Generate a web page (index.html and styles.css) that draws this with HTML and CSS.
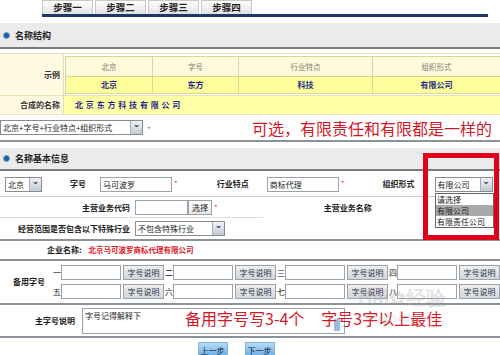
FILE: index.html
```html
<html>
<head>
	<meta charset="utf-8">
	<link rel="stylesheet" href="styles.css">
</head>
<body>
<div class="tabs">
	<div class="tab">步骤一</div>
	<div class="tab">步骤二</div>
	<div class="tab">步骤三</div>
	<div class="tab">步骤四</div>
</div>

<div class="section-head"><span class="dot"></span>名称结构</div>

<div class="sample">
	<div class="sample-row">
		<div class="sample-label">示例</div>
		<div class="sample-table">
			<div class="st-head">
				<div class="c1">北京</div><div class="c2">字号</div><div class="c3">行业特点</div><div class="c4">组织形式</div>
			</div>
			<div class="st-data">
				<div class="c1">北京</div><div class="c2">东方</div><div class="c3">科技</div><div class="c4">有限公司</div>
			</div>
		</div>
	</div>
	<div class="sample-row composed">
		<div class="sample-label">合成的名称</div>
		<div class="composed-value">北 京 东 方 科 技 有 限 公 司</div>
	</div>
</div>

<div class="pick-row">
	<div class="select wide">北京+字号+行业特点+组织形式<span class="arrow">&#8964;</span></div>
	<span class="star">·</span>
	<div class="note">可选，有限责任和有限都是一样的</div>
</div>

<div class="section-head second"><span class="dot"></span>名称基本信息</div>

<div class="form-row first">
	<div class="select city">北京<span class="arrow">&#8964;</span></div>
	<span class="lbl l-zihao">字号</span>
	<div class="input w72">马可波罗</div><span class="star">*</span>
	<span class="lbl l-hangye">行业特点</span>
	<div class="input w72">商标代理</div><span class="star">*</span>
	<span class="lbl l-zuzhi">组织形式</span>
	<div class="select org">有限公司<span class="arrow">&#8964;</span></div>
</div>

<div class="form-block">
	<div class="form-row code">
		<span class="lbl right">主营业务代码</span>
		<div class="input w53"></div><div class="btn">选择</div><span class="star">*</span>
		<span class="lbl l-mingcheng">主营业务名称</span>
	</div>
	<div class="form-row scope-row">
		<span class="lbl right">经营范围是否包含以下特殊行业</span>
		<div class="select scope">不包含特殊行业<span class="arrow">&#8964;</span></div>
	</div>
</div>

<div class="company-row">
	<span class="lbl">企业名称:</span>
	<span class="company">北京马可波罗商标代理有限公司</span>
</div>

<div class="backup">
	<span class="lbl backup-label">备用字号</span>
	<div class="backup-grid">
		<div class="backup-line">
			<span class="num">一</span><div class="input w60"></div><div class="btn gray">字号说明</div>
			<span class="num">二</span><div class="input w60"></div><div class="btn gray">字号说明</div>
			<span class="num">三</span><div class="input w60"></div><div class="btn gray">字号说明</div>
			<span class="num">四</span><div class="input w60"></div><div class="btn gray">字号说明</div>
		</div>
		<div class="backup-line">
			<span class="num">五</span><div class="input w60"></div><div class="btn gray">字号说明</div>
			<span class="num">六</span><div class="input w60"></div><div class="btn gray">字号说明</div>
			<span class="num">七</span><div class="input w60"></div><div class="btn gray">字号说明</div>
			<span class="num">八</span><div class="input w60"></div><div class="btn gray">字号说明</div>
		</div>
	</div>
</div>

<div class="desc-row">
	<span class="lbl">主字号说明</span>
	<div class="textarea">字号记得解释下<span class="grip"></span></div>
	<div class="overlay-note">备用字号写3-4个<span class="gap"></span>字号3字以上最佳</div>
</div>

<div class="nav">
	<div class="nav-btn">上一步</div>
	<div class="nav-btn">下一步</div>
</div>

<div class="watermark">Bai<span>&#10047;</span>经验<br><small>jingyan.baidu.com</small></div>

<div class="highlight"></div>
<div class="dropdown">
	<div>请选择</div>
	<div class="on">有限公司</div>
	<div>有限责任公司</div>
</div>
</body>
</html>
```

FILE: styles.css
```css
body {
	margin: 0;
	width: 500px;
	height: 355px;
	overflow: hidden;
	background: #fff;
	font-family: "Noto Sans CJK SC", "DejaVu Sans", sans-serif;
	font-size: 8px;
	line-height: 1;
	color: #222;
	position: relative;
}

.tabs {
	display: flex;
	gap: 2px;
	margin-left: 42px;
	margin-right: 12px;
	height: 14px;
	border-bottom: 3px solid #1f3769;
}
.tab {
	width: 51px;
	height: 14px;
	box-sizing: border-box;
	border: 1px solid #c8c8c8;
	border-bottom: none;
	background: linear-gradient(#ffffff, #e2e2e2);
	font-weight: bold;
	text-align: center;
	line-height: 13px;
	font-size: 9.5px;
}

.section-head {
	margin-top: 6px;
	height: 24px;
	background: #ebebeb;
	border-bottom: 2px solid #7a7a7a;
	display: flex;
	align-items: center;
	padding-left: 3px;
	font-weight: bold;
	font-size: 9px;
	color: #222;
}
.section-head.second {
	margin-top: 6px;
	height: 21px;
}
.dot {
	width: 5px;
	height: 5px;
	border-radius: 50%;
	background: #1f5f9c;
	border: 1px solid #6fa0cc;
	margin-right: 5px;
}

.sample {
	margin-top: 4px;
	border-top: 1px solid #e9e3b9;
}
.sample-row {
	display: flex;
	border-bottom: 1px solid #e8e2b8;
}
.sample-label {
	width: 60px;
	padding-right: 3px;
	background: #fffbe3;
	border-right: 1px solid #e6dfa9;
	font-weight: bold;
	color: #333;
	display: flex;
	align-items: center;
	justify-content: flex-end;
}
.sample-table {
	flex: 1;
	margin: 2px 0 1px 1px;
	border: 1px solid #ddd49a;
	border-right: none;
}
.st-head, .st-data {
	display: flex;
	text-align: center;
}
.st-head {
	height: 19px;
	line-height: 19px;
	background: #fffbdc;
	color: #7c7c72;
	font-size: 7.5px;
	border-bottom: 1px solid #ddd49a;
}
.st-data {
	height: 16px;
	line-height: 16px;
	background: #fffe9c;
	color: #1b2a8c;
	font-weight: bold;
}
.c1, .c2, .c3 { border-right: 1px solid #ddd49a; }
.c1 { width: 86px; }
.c2 { width: 85px; }
.c3 { width: 133px; }
.c4 { flex: 1; }
.composed { height: 18px; }
.composed-value {
	flex: 1;
	background: #ffffa6;
	color: #1b2a8c;
	font-weight: bold;
	padding-left: 11px;
	line-height: 18px;
	letter-spacing: 0.5px;
}

.pick-row {
	display: flex;
	align-items: center;
	height: 25px;
	border-bottom: 2px solid #8b9299;
}
.select {
	position: relative;
	flex-shrink: 0;
	height: 15px;
	box-sizing: border-box;
	border: 1px solid #8b8b8b;
	background: #fff;
	line-height: 13px;
	padding-left: 2px;
	font-size: 8px;
	white-space: nowrap;
}
.arrow {
	position: absolute;
	right: 0;
	top: 0;
	width: 11px;
	height: 13px;
	background: linear-gradient(#eef1f6, #c3cad6);
	border-left: 1px solid #aab;
	text-align: center;
	line-height: 6px;
	font-size: 9px;
	font-weight: bold;
	color: #223;
}
.select.wide {
	width: 143px;
}
.star {
	color: #e24040;
	font-size: 8px;
	margin: 0 2px;
}
.note {
	margin-left: 97px;
	color: #d2192a;
	font-size: 16px;
	line-height: 20px;
	white-space: nowrap;
}

.form-row {
	display: flex;
	align-items: center;
}
.form-row > * {
	flex-shrink: 0;
}
.form-row.first {
	height: 24px;
	border-bottom: 1px solid #c6cfd6;
	padding-top: 1px;
}
.select.city {
	width: 37px;
	margin-left: 5px;
}
.lbl {
	font-weight: bold;
	color: #222;
	font-size: 8px;
	white-space: nowrap;
}
.l-zihao { margin-left: 28px; margin-right: 14px; }
.l-hangye { margin-left: 37px; margin-right: 18px; }
.l-zuzhi { margin-left: 36px; margin-right: 20px; }
.l-mingcheng { margin-left: 104px; }
.input {
	flex-shrink: 0;
	height: 15px;
	box-sizing: border-box;
	border: 1px solid #9aa3ab;
	background: #fff;
	line-height: 13px;
	padding-left: 2px;
	font-size: 8px;
}
.w72 { width: 72px; }
.w53 { width: 53px; }
.w60 { width: 60px; }
.select.org { width: 58px; }
.select.scope { width: 90px; }

.form-block {
	border-bottom: 2px solid #8b9299;
}
.form-row.code {
	height: 21px;
	background: linear-gradient(#d9dde0, #d9dde0) no-repeat left bottom / 263px 1px;
}
.form-row.scope-row {
	height: 21px;
}
.lbl.right {
	width: 130px;
	text-align: right;
	margin-right: 5px;
}
.btn {
	flex-shrink: 0;
	height: 15px;
	box-sizing: border-box;
	border: 1px solid #9aa3ab;
	background: linear-gradient(#fff, #e6e6e6);
	padding: 0 3px;
	line-height: 13px;
	font-size: 8px;
	white-space: nowrap;
}
.btn.gray {
	width: 41px;
	padding: 0;
	margin-left: 2px;
	text-align: center;
	background: linear-gradient(#eef0f2, #d3d7db);
	color: #334;
}

.company-row {
	display: flex;
	align-items: center;
	height: 18px;
	padding-left: 47px;
	border-bottom: 2px solid #8b9299;
}
.company {
	margin-left: 7px;
	color: #e0141e;
	font-weight: bold;
	font-size: 7.5px;
}

.backup {
	display: flex;
	align-items: center;
	height: 42px;
	border-bottom: 2px solid #8b9299;
}
.backup-label {
	width: 75px;
	text-align: right;
	margin-right: 7px;
}
.backup-grid {
	display: flex;
	flex-direction: column;
	gap: 4px;
}
.backup-line {
	display: flex;
	align-items: center;
	white-space: nowrap;
}
.num {
	width: 8px;
	font-size: 8px;
	margin-left: 1px;
}

.desc-row {
	display: flex;
	align-items: center;
	height: 31px;
	border-bottom: 2px solid #8b9299;
	position: relative;
}
.desc-row .lbl {
	width: 75px;
	text-align: right;
	margin-right: 7px;
}
.textarea {
	position: relative;
	width: 263px;
	height: 26px;
	box-sizing: border-box;
	border: 1px solid #9aa3ab;
	padding: 2px 2px;
	font-size: 8px;
	line-height: 9px;
}
.grip {
	position: absolute;
	right: 4px;
	bottom: 2px;
	width: 6px;
	height: 12px;
	background: #9dbbe0;
}
.overlay-note {
	position: absolute;
	left: 185px;
	top: 3px;
	color: #d2192a;
	font-size: 16px;
	line-height: 20px;
	white-space: nowrap;
}
.gap {
	display: inline-block;
	width: 17px;
}

.nav {
	display: flex;
	justify-content: center;
	gap: 17px;
	padding-top: 4px;
	padding-right: 28px;
}
.nav-btn {
	width: 28px;
	height: 15px;
	background: linear-gradient(#b5dbf8, #5fa6e4);
	border: 1px solid #86b8e0;
	font-size: 8px;
	text-align: center;
	line-height: 15px;
	color: #123;
}

.watermark {
	position: absolute;
	left: 358px;
	top: 288px;
	color: rgba(160, 160, 160, 0.3);
	font-family: "Liberation Sans", sans-serif;
	font-weight: bold;
	font-size: 20px;
	line-height: 20px;
	white-space: nowrap;
}
.watermark small {
	font-size: 9px;
	font-weight: normal;
	margin-left: 4px;
}

.highlight {
	position: absolute;
	left: 423px;
	top: 153px;
	width: 66px;
	height: 77px;
	border: 5px solid #e3001b;
}
.dropdown {
	position: absolute;
	left: 435px;
	top: 193px;
	width: 57px;
	background: #fff;
	border: 1px solid #666;
	font-size: 8px;
	line-height: 11px;
}
.dropdown div { padding-left: 1px; }
.dropdown .on { background: #a9a9a9; }
```
